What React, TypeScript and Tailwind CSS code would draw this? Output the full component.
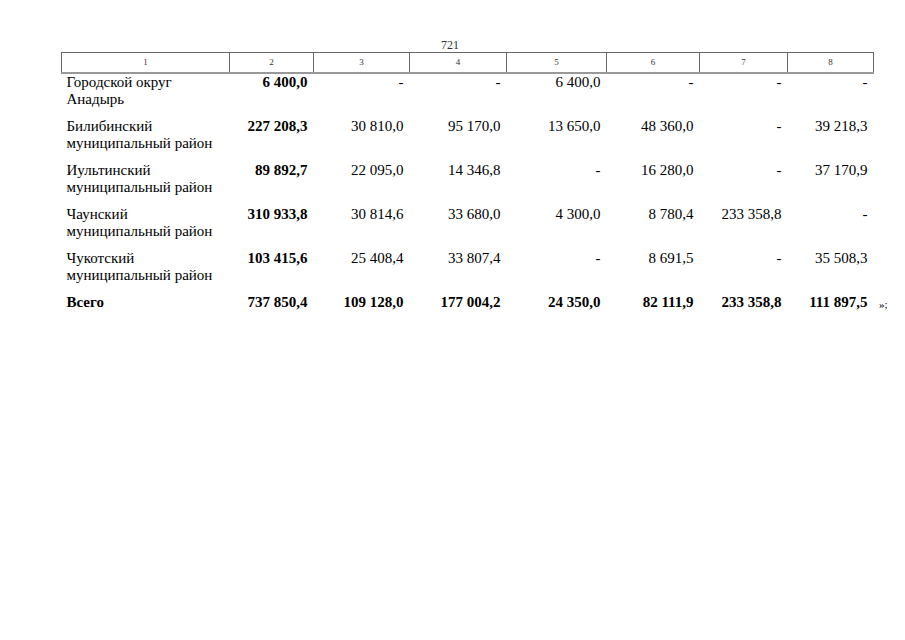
import React from 'react';

interface Row {
    name: string[];
    values: string[];
    total?: boolean;
}

const rows: Row[] = [
    { name: ['Городской округ', 'Анадырь'], values: ['6 400,0', '-', '-', '6 400,0', '-', '-', '-'] },
    { name: ['Билибинский', 'муниципальный район'], values: ['227 208,3', '30 810,0', '95 170,0', '13 650,0', '48 360,0', '-', '39 218,3'] },
    { name: ['Иультинский', 'муниципальный район'], values: ['89 892,7', '22 095,0', '14 346,8', '-', '16 280,0', '-', '37 170,9'] },
    { name: ['Чаунский', 'муниципальный район'], values: ['310 933,8', '30 814,6', '33 680,0', '4 300,0', '8 780,4', '233 358,8', '-'] },
    { name: ['Чукотский', 'муниципальный район'], values: ['103 415,6', '25 408,4', '33 807,4', '-', '8 691,5', '-', '35 508,3'] },
    { name: ['Всего'], values: ['737 850,4', '109 128,0', '177 004,2', '24 350,0', '82 111,9', '233 358,8', '111 897,5'], total: true },
];

const widths = ['w-[168px]', 'w-[84px]', 'w-[96px]', 'w-[97px]', 'w-[100px]', 'w-[93px]', 'w-[88px]', 'w-[86px]'];

const App: React.FC = () => {
    return (
        <div className="w-[905px] h-[640px] bg-white text-black font-['Liberation_Serif','Times_New_Roman',serif]">
            <div className="pt-[38px] pl-[61px]">
                <div className="pl-[380px] text-[12px] leading-[14px] text-[#333]">721</div>
                <table className="w-[812px] table-fixed border-collapse">
                    <colgroup>
                        {widths.map((w, i) => <col key={i} className={w} />)}
                    </colgroup>
                    <thead>
                        <tr className="h-[20px]">
                            {widths.map((_, i) => (
                                <th
                                    key={i}
                                    className="border border-[#666] border-b-2 border-b-[#999] text-center text-[9px] font-normal leading-[10px] text-[#333] p-0"
                                >
                                    {i + 1}
                                </th>
                            ))}
                        </tr>
                    </thead>
                    <tbody className="text-[15px] leading-[17px]">
                        {rows.map((row, r) => (
                            <tr key={r} className="align-top">
                                <td className={`pl-[5px] pt-0 pb-[10px] ${row.total ? 'font-bold' : ''}`}>
                                    {row.name.map((line, k) => <div key={k}>{line}</div>)}
                                </td>
                                {row.values.map((v, c) => (
                                    <td
                                        key={c}
                                        className={`text-right pr-[6px] pt-0 ${row.total || c === 0 ? 'font-bold' : ''}`}
                                    >
                                        {v}
                                    </td>
                                ))}
                            </tr>
                        ))}
                    </tbody>
                </table>
                <div className="relative w-[812px]">
                    <span className="absolute left-[818px] top-[-25px] text-[11px]">»;</span>
                </div>
            </div>
        </div>
    );
};

export default App;
